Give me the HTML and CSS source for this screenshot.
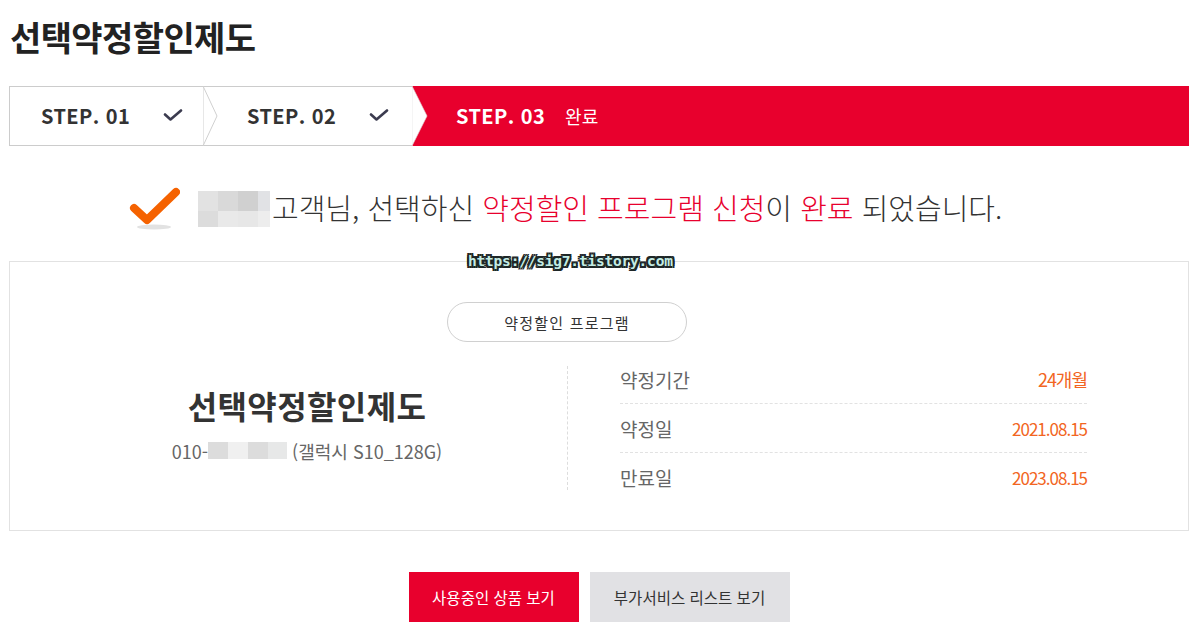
FILE: index.html
```html
<!DOCTYPE html>
<html lang="ko">
<head>
<meta charset="utf-8">
<title>선택약정할인제도</title>
<link rel="stylesheet" href="styles.css">
</head>
<body>
<div class="page">
  <h1 class="title">선택약정할인제도</h1>

  <div class="steps">
    <div class="step step-done step-1">
      <span class="step-label">STEP. 01</span>
      <svg class="step-check" viewBox="0 0 20 14" aria-hidden="true"><polyline points="2,5.5 7.5,10.5 18,1.5" /></svg>
      <svg class="chevron chevron-line" viewBox="0 0 15 60" preserveAspectRatio="none" aria-hidden="true"><polygon points="0,0 14,30 0,60" /></svg>
    </div>
    <div class="step step-done step-2">
      <span class="step-label">STEP. 02</span>
      <svg class="step-check" viewBox="0 0 20 14" aria-hidden="true"><polyline points="2,5.5 7.5,10.5 18,1.5" /></svg>
      <svg class="chevron chevron-cut" viewBox="0 0 16 60" preserveAspectRatio="none" aria-hidden="true"><polygon points="0,0 15,30 0,60" /></svg>
    </div>
    <div class="step step-current">
      <span class="step-label">STEP. 03</span>
      <span class="step-sub">완료</span>
    </div>
  </div>

  <div class="message">
    <svg class="ok-icon" viewBox="0 0 52 46" aria-hidden="true">
      <ellipse class="ok-shadow" cx="26" cy="41" rx="17" ry="2.5" />
      <polyline class="ok-mark" points="6,22 19,34 48,6" />
    </svg>
    <span class="blur name-blur" aria-hidden="true"><i></i><i></i><i></i><i></i><i></i><i></i><i></i><i></i></span>
    <p class="message-text">고객님, 선택하신 <em>약정할인 프로그램 신청</em>이 <em>완료</em> 되었습니다.</p>
  </div>

  <div class="card">
    <span class="watermark">https://sig7.tistory.com</span>
    <div class="pill">약정할인 프로그램</div>
    <div class="card-body">
      <div class="plan">
        <h2 class="plan-name">선택약정할인제도</h2>
        <p class="plan-line">010-<span class="blur phone-blur" aria-hidden="true"><i></i><i></i><i></i><i></i></span> (갤럭시 S10_128G)</p>
      </div>
      <dl class="terms">
        <div class="term"><dt>약정기간</dt><dd class="big">24개월</dd></div>
        <div class="term"><dt>약정일</dt><dd>2021.08.15</dd></div>
        <div class="term"><dt>만료일</dt><dd>2023.08.15</dd></div>
      </dl>
    </div>
  </div>

  <div class="actions">
    <a class="btn btn-primary" href="#">사용중인 상품 보기</a>
    <a class="btn btn-secondary" href="#">부가서비스 리스트 보기</a>
  </div>
</div>
</body>
</html>
```

FILE: styles.css
```css
* { box-sizing: border-box; }
html, body { margin: 0; padding: 0; background: #fff; }
body {
  font-family: "Noto Sans CJK KR", "Noto Sans", sans-serif;
  color: #333;
}

.page { width: 1180px; margin-left: 9px; }

.title {
  margin: 0;
  padding: 13px 0 0 1px;
  height: 62px;
  font-size: 34px;
  line-height: 48px;
  font-weight: 700;
  letter-spacing: -0.6px;
  color: #222;
}

/* steps */
.steps { display: flex; height: 60px; margin-top: 24px; }
.step { position: relative; display: flex; align-items: center; height: 60px; }
.step-done {
  background: #fff;
  border-top: 1px solid #ccc;
  border-bottom: 1px solid #ccc;
  color: #333;
}
.step-1 { width: 194px; border-left: 1px solid #ccc; padding-left: 31px; z-index: 3; }
.step-2 { width: 209px; padding-left: 44px; z-index: 2; }
.step-current { flex: 1; background: #e8002d; padding-left: 44px; color: #fff; }
.step-label { font-size: 20px; font-weight: 700; letter-spacing: 0.4px; line-height: 1; }
.step-check { width: 20px; height: 14px; margin-left: 33px; }
.step-check polyline { fill: none; stroke: #3b3b4f; stroke-width: 2.6; stroke-linecap: round; stroke-linejoin: round; }
.step-sub { font-size: 18px; margin-left: 20px; line-height: 1; }

.chevron { position: absolute; top: -1px; height: 60px; }
.chevron-line { right: -15px; width: 15px; }
.chevron-line polygon { fill: #fff; stroke: #d0d0d0; stroke-width: 1; }
.chevron-cut { right: -16px; width: 16px; }
.chevron-cut polygon { fill: #fff; stroke: #ddd; stroke-width: 0.6; }

/* message */
.message {
  display: flex;
  align-items: center;
  height: 44px;
  margin-top: 39px;
  padding-left: 119px;
}
.ok-icon { width: 52px; height: 46px; margin-top: 3px; }
.ok-mark { fill: none; stroke: #f56200; stroke-width: 8; stroke-linecap: round; stroke-linejoin: round; }
.ok-shadow { fill: #e2e2e2; }

.blur { display: inline-grid; vertical-align: middle; }
.blur i { display: block; }
.name-blur {
  grid-template-columns: 20px 20px 20px 12px;
  grid-template-rows: 20px 16px;
  margin-left: 18px;
  margin-top: 3px;
}
.name-blur i:nth-child(1) { background: #e2e2e2; }
.name-blur i:nth-child(2) { background: #d9d9d9; }
.name-blur i:nth-child(3) { background: #d0d0d0; }
.name-blur i:nth-child(4) { background: #e1e2e5; }
.name-blur i:nth-child(5) { background: #dcdcdc; }
.name-blur i:nth-child(6) { background: #e9e9e9; }
.name-blur i:nth-child(7) { background: #e7e7e7; }
.name-blur i:nth-child(8) { background: #ededed; }

.message-text {
  margin: 0 0 0 2px;
  font-size: 29px;
  font-weight: 300;
  letter-spacing: 0;
  line-height: 44px;
  color: #333;
  white-space: nowrap;
}
.message-text em { font-style: normal; color: #e8002d; }

/* card */
.card {
  position: relative;
  margin-top: 32px;
  height: 270px;
  border: 1px solid #e2e2e2;
  padding: 40px 101px 0 37px;
}
.watermark {
  position: absolute;
  top: -10px;
  left: 458px;
  font-family: "DejaVu Sans Mono", monospace;
  font-weight: 700;
  font-size: 14.5px;
  line-height: 18px;
  letter-spacing: -0.2px;
  color: #c3ece4;
  text-shadow:
    -2px -2px 0 #1d2626, 2px -2px 0 #1d2626, -2px 2px 0 #1d2626, 2px 2px 0 #1d2626,
    0 -2px 0 #1d2626, 0 2px 0 #1d2626, -2px 0 0 #1d2626, 2px 0 0 #1d2626;
}
.pill {
  width: 240px;
  height: 40px;
  margin: 0 auto;
  border: 1px solid #d0d0d0;
  border-radius: 20px;
  display: flex;
  align-items: center;
  justify-content: center;
  font-size: 15px;
  letter-spacing: 1.2px;
  color: #333;
}
.card-body { display: flex; margin-top: 13px; }
.plan {
  width: 521px;
  margin: 11px 0;
  border-right: 1px dashed #ddd;
  display: flex;
  flex-direction: column;
  align-items: center;
  justify-content: center;
  padding-bottom: 8px;
}
.plan-name {
  margin: 0;
  font-size: 32px;
  line-height: 40px;
  font-weight: 700;
  letter-spacing: 0.4px;
  color: #333;
}
.plan-line {
  margin: 13px 0 0;
  font-size: 18px;
  line-height: 26px;
  color: #666;
  display: flex;
  align-items: center;
  white-space: pre;
}
.phone-blur { grid-template-columns: 20px 20px 20px 19px; grid-template-rows: 17px; }
.phone-blur i:nth-child(1) { background: #dcdcdc; }
.phone-blur i:nth-child(2) { background: #f0f0f0; }
.phone-blur i:nth-child(3) { background: #dcdcdc; }
.phone-blur i:nth-child(4) { background: #e7e8e8; }

.terms { flex: 1; margin: 0 0 0 52px; }
.term {
  display: flex;
  align-items: center;
  justify-content: space-between;
  height: 49px;
  border-bottom: 1px dashed #e2e2e2;
}
.term:last-child { height: 48px; border-bottom: 0; }
.term dt { font-size: 19px; color: #666; font-weight: 400; }
.term dd { margin: 0; font-size: 17px; color: #f26522; letter-spacing: -1px; }
.term dd.big { font-size: 18px; }

/* actions */
.actions { display: flex; justify-content: center; gap: 11px; margin-top: 41px; }
.btn {
  display: flex;
  align-items: center;
  justify-content: center;
  height: 50px;
  font-size: 15.5px;
  text-decoration: none;
}
.btn-primary { width: 170px; background: #e8002d; color: #fff; }
.btn-secondary { width: 200px; background: #e1e1e4; color: #333; }
```
